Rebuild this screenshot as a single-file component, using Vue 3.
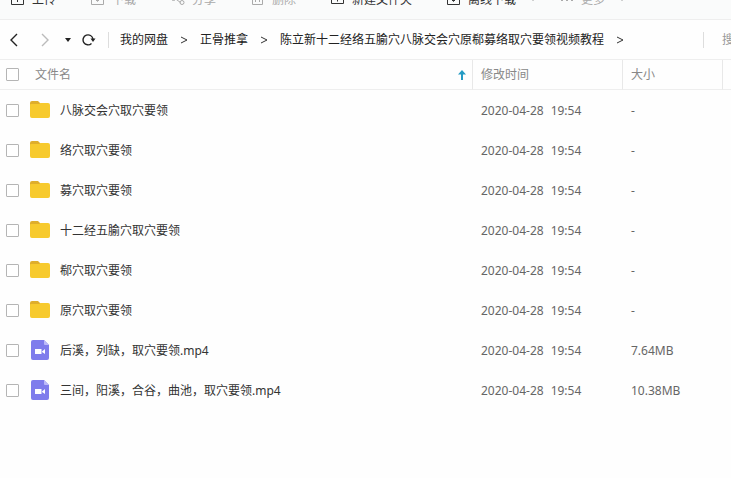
<script setup>
import { ref } from 'vue'

const tools = [
  { icon: 'upload', label: '上传' },
  { icon: 'download', label: '下载', disabled: true },
  { icon: 'share', label: '分享', disabled: true },
  { icon: 'trash', label: '删除', disabled: true },
  { icon: 'create', label: '新建文件夹' },
  { icon: 'download', label: '离线下载', menu: true },
  { icon: 'more', label: '更多', disabled: true, menu: true },
]

const crumbs = ['我的网盘', '正骨推拿', '陈立新十二经络五腧穴八脉交会穴原郗募络取穴要领视频教程']

const files = ref([
  { name: '八脉交会穴取穴要领', type: 'folder', size: '-' },
  { name: '络穴取穴要领', type: 'folder', size: '-' },
  { name: '募穴取穴要领', type: 'folder', size: '-' },
  { name: '十二经五腧穴取穴要领', type: 'folder', size: '-' },
  { name: '郗穴取穴要领', type: 'folder', size: '-' },
  { name: '原穴取穴要领', type: 'folder', size: '-' },
  { name: '后溪，列缺，取穴要领.mp4', type: 'video', size: '7.64MB' },
  { name: '三间，阳溪，合谷，曲池，取穴要领.mp4', type: 'video', size: '10.38MB' },
].map((f) => ({ ...f, day: '2020-04-28', time: '19:54', checked: false })))
</script>

<template>
  <main class="drive">
    <div class="toolbar">
      <button
        v-for="tool in tools"
        :key="tool.label"
        class="tool"
        :class="{ 'has-menu': tool.menu }"
        :disabled="tool.disabled"
        type="button"
      >
        <svg class="tool-icon" viewBox="0 0 14 14" aria-hidden="true">
          <path v-if="tool.icon === 'upload'" d="M.5 8v4.500h12V8M6.500 10V2M3.500 5l3-3 3 3" />
          <path v-else-if="tool.icon === 'download'" d="M.5 8v4.500h12V8M6.500 1v8M3.500 6.500l3 3 3-3" />
          <path v-else-if="tool.icon === 'share'" d="M9.500 2.500L4 6.500l5.500 4M4.500 6.500a2 2 0 1 1-4 0a2 2 0 1 1 4 0M13 10.500a2 2 0 1 1-4 0a2 2 0 1 1 4 0M13 2.500a2 2 0 1 1-4 0a2 2 0 1 1 4 0" />
          <path v-else-if="tool.icon === 'trash'" d="M.5 3.500h12M1.500 3.500v9h10v-9M4.500 6v4M8.500 6v4" />
          <path v-else-if="tool.icon === 'create'" d="M.5 2.500h12v9H.5zM6.500 4.500v5M4 7h5" />
          <path v-else class="dots" d="M1 7h2v2H1zM6 7h2v2H6zM11 7h2v2h-2z" />
        </svg>
        <span class="text">{{ tool.label }}</span>
        <svg v-if="tool.menu" class="tool-arrow" viewBox="0 0 8 8" aria-hidden="true"><path d="M1 2.500l3 3 3-3" /></svg>
      </button>
    </div>

    <div class="location">
      <div class="history">
        <button type="button" aria-label="后退">
          <svg width="8" height="14" viewBox="0 0 8 14"><path d="M7 1L1 7l6 6" /></svg>
        </button>
        <button type="button" aria-label="前进" disabled>
          <svg width="8" height="14" viewBox="0 0 8 14"><path d="M1 1l6 6-6 6" /></svg>
        </button>
        <button type="button" aria-label="历史">
          <svg width="6" height="14" viewBox="0 0 6 14"><path class="solid" d="M0 5h6L3 9z" /></svg>
        </button>
        <button type="button" aria-label="刷新">
          <svg width="14" height="14" viewBox="0 0 14 14"><path d="M9.500 10.500A5 5 0 1 1 11 6" /><path class="solid" d="M8.500 5.500h5L11 9z" /></svg>
        </button>
      </div>
      <nav class="crumbs">
        <template v-for="crumb in crumbs" :key="crumb">
          <a href="#">{{ crumb }}</a>
          <svg width="8" height="8" viewBox="0 0 8 8" aria-hidden="true"><path d="M1 1l6 3-6 3" /></svg>
        </template>
      </nav>
      <div class="search"><input type="text" aria-label="搜索" placeholder="搜索" /></div>
    </div>

    <table class="files">
      <colgroup>
        <col />
        <col class="col-time" />
        <col class="col-size" />
        <col class="col-rest" />
      </colgroup>
      <thead>
        <tr>
          <th>
            <div class="head-name">
              <input type="checkbox" aria-label="全选" />
              <span>文件名</span>
              <svg class="sort" width="8" height="10" viewBox="0 0 8 10" aria-hidden="true"><path d="M4 0l4 4.500H5V10H3V4.500H0z" /></svg>
            </div>
          </th>
          <th>修改时间</th>
          <th>大小</th>
          <th></th>
        </tr>
      </thead>
      <tbody>
        <tr v-for="(file, i) in files" :key="file.name">
          <td>
            <div class="file-name">
              <input :id="`file-${i}`" v-model="file.checked" type="checkbox" />
              <svg v-if="file.type === 'folder'" width="20" height="20" viewBox="0 0 20 20" aria-hidden="true">
                <path fill="#dfae2c" d="M0 3q0-2 2-2h6l2.500 2.500V8H0z" />
                <path fill="#f7ca2e" d="M0 5q0-1 1-1h8l1.500-1H18q2 0 2 2V16q0 2-2 2H2q-2 0-2-2z" />
              </svg>
              <svg v-else width="20" height="20" viewBox="0 0 20 20" aria-hidden="true">
                <path fill="#7f7cec" d="M1 2q0-2 2-2h11l5 5v13q0 2-2 2H3q-2 0-2-2z" />
                <path fill="#bcbaf8" d="M14 0l5 5h-4q-1 0-1-1z" />
                <path fill="#fff" d="M5 9h6.500v5H5zM12 11.500l3-2.500v5l-3-2z" />
              </svg>
              <label class="text" :for="`file-${i}`">{{ file.name }}</label>
            </div>
          </td>
          <td><time class="stamp text"><span>{{ file.day }}</span> <span>{{ file.time }}</span></time></td>
          <td><div class="text">{{ file.size }}</div></td>
          <td></td>
        </tr>
      </tbody>
    </table>
  </main>
</template>

<style>
body {
  background: #fefefe;
}
</style>

<style scoped>
.drive {
  min-height: 100vh;
  overflow: hidden;
  color: #333;
  font: 12px/20px "Noto Sans", "Noto Sans CJK SC", sans-serif;
}

button,
input {
  margin: 0;
  padding: 0;
  border: 0;
  background: none;
  color: inherit;
  font: inherit;
}

svg {
  flex: none;
  display: block;
  fill: none;
  stroke: currentColor;
}

/* Optical centring of the glyphs against their icons */
.text {
  padding-top: 2px;
}

.toolbar {
  display: flex;
  align-items: flex-end;
  gap: 35px;
  box-sizing: border-box;
  height: 20px;
  padding: 0 11px 9px;
  overflow: hidden;
  border-bottom: 1px solid #eee;
  background: #fafbfb;
}

.tool {
  flex: none;
  display: flex;
  align-items: center;
  gap: 7px;
  white-space: nowrap;
}

.tool:disabled {
  color: #aaa;
}

.has-menu {
  margin-right: -12px;
}

.tool-icon {
  width: 14px;
  height: 14px;
}

.tool-arrow {
  width: 8px;
  height: 8px;
  margin-left: 6px;
  color: #999;
}

.tool-icon .dots,
.solid {
  fill: currentColor;
  stroke: none;
}

.location {
  display: flex;
  align-items: center;
  height: 39px;
  border-bottom: 1px solid #eee;
}

.history {
  display: flex;
  align-items: center;
  gap: 11px;
  height: 16px;
  padding: 0 12px 0 10px;
  border-right: 1px solid #ddd;
  color: #222;
}

.history button:nth-child(2) {
  margin: 0 5px 0 12px;
  color: #bbb;
}

.history svg {
  stroke-width: 1.4;
}

.crumbs {
  flex: 1;
  display: flex;
  align-items: center;
  gap: 12px;
  padding-left: 11px;
  white-space: nowrap;
}

.crumbs a {
  color: #222;
  text-decoration: none;
}

.search {
  flex: none;
  display: flex;
  align-items: center;
  width: 9px;
  height: 16px;
  padding-left: 18px;
  border-left: 1px solid #ddd;
}

.search input {
  flex: none;
  width: 60px;
  outline: none;
}

.search input::placeholder {
  color: #999;
}

.files {
  width: 100%;
  table-layout: fixed;
  border-collapse: separate;
  border-spacing: 0;
  color: #666;
}

.col-time {
  width: 150px;
}

.col-size {
  width: 100px;
}

.col-rest {
  width: 9px;
}

th,
td {
  box-sizing: border-box;
  height: 40px;
  padding: 0 0 0 9px;
  font-weight: 400;
  text-align: left;
  white-space: nowrap;
}

th {
  height: 30px;
  border-bottom: 1px solid #eee;
  border-left: 1px solid #e8e8e8;
  padding-left: 8px;
  color: #888;
}

th:first-child,
td:first-child {
  border-left: 0;
  padding-left: 6px;
}

th:last-child,
td:last-child {
  padding: 0;
}

.head-name,
.file-name {
  display: flex;
  align-items: center;
}

.head-name {
  gap: 16px;
}

.sort {
  margin: 0 6px 0 auto;
  fill: #259bc4;
  stroke: none;
}

.file-name {
  color: #333;
}

.file-name svg {
  margin: 0 10px 0 11px;
  stroke: none;
}

input[type='checkbox'] {
  flex: none;
  width: 13px;
  height: 13px;
  appearance: none;
  border: 1px solid #b5b5b5;
  border-radius: 1px;
  background: #fff;
}

input[type='checkbox']:checked {
  background: #259bc4;
}

.stamp {
  display: flex;
  gap: 7px;
}
</style>
